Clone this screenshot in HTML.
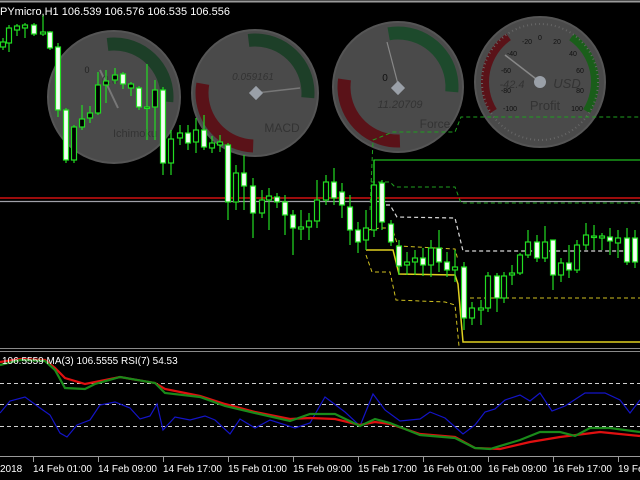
<!DOCTYPE html>
<html><head><meta charset="utf-8"><style>
html,body{margin:0;padding:0;background:#000;width:640px;height:480px;overflow:hidden}
svg{display:block}
text{font-family:"Liberation Sans",sans-serif}
</style></head><body>
<svg id="s" width="640" height="480" viewBox="0 0 640 480" xmlns="http://www.w3.org/2000/svg">
<rect width="640" height="480" fill="#000"/>
<line x1="0" y1="1.5" x2="640" y2="1.5" stroke="#9a9a9a" stroke-width="2"/>
<g id="gauges"></g>
<g id="lines">
<line x1="0" y1="198" x2="640" y2="198" stroke="#d01010" stroke-width="1.5"/>
<line x1="0" y1="201.5" x2="640" y2="201.5" stroke="#a0a0a8" stroke-width="1.2"/>
<polyline points="374,200 374,160 640,160" fill="none" stroke="#1fb81f" stroke-width="1.2"/>
<polyline points="370,210 373,140 393,132 455,132 461,117 640,117" fill="none" stroke="#1fa01f" stroke-width="1" stroke-dasharray="4,3"/>
<polyline points="371,182 390,182 395,187 455,187 461,203 640,203" fill="none" stroke="#1fa01f" stroke-width="1" stroke-dasharray="4,3"/>
<polyline points="372,205 390,205 397,217 455,218 463,251 640,251" fill="none" stroke="#d8d8d8" stroke-width="1.2" stroke-dasharray="4,3"/>
<polyline points="366,250 393,250 399,274 455,275 458,284 463,342 640,342" fill="none" stroke="#e0d020" stroke-width="1.5"/>
<polyline points="368,230 380,228 392,228 398,246 455,249 458,260" fill="none" stroke="#d0c020" stroke-width="1" stroke-dasharray="4,3"/>
<polyline points="366,255 372,272 390,272 396,300 445,302 455,305 459,346" fill="none" stroke="#d0c020" stroke-width="1" stroke-dasharray="4,3"/>
<polyline points="463,298 640,298" fill="none" stroke="#d0c020" stroke-width="1" stroke-dasharray="4,3"/>
</g>
<g id="candles"></g>
<text x="0" y="15" fill="#fff" font-size="11">PYmicro,H1  106.539 106.576 106.535 106.556</text>
<line x1="0" y1="348.5" x2="640" y2="348.5" stroke="#8a8a8a" stroke-width="1"/>
<line x1="0" y1="351.5" x2="640" y2="351.5" stroke="#8a8a8a" stroke-width="1"/>
<g stroke="#d0d0d0" stroke-width="1" stroke-dasharray="4,3">
<line x1="0" y1="383.5" x2="640" y2="383.5"/>
<line x1="0" y1="404.5" x2="640" y2="404.5"/>
<line x1="0" y1="426.5" x2="640" y2="426.5"/>
</g>
<polyline fill="none" stroke="#1414c8" stroke-width="1.2" points="0,413 10,401 25,397 40,408 50,415 60,433 67,437 77,425 90,420 100,405 115,402 130,408 140,419 150,416 157,404 163,430 175,417 190,420 205,416 215,420 230,434 240,419 255,428 270,420 295,428 310,423 325,397 345,412 360,426 373,394 385,410 400,421 420,419 430,412 445,418 463,434 475,425 485,412 495,409 505,400 520,395 530,401 540,393 552,411 565,406 585,393 605,393 620,400 630,413 640,400"/>
<polyline fill="none" stroke="#e01010" stroke-width="2.2" points="0,362 20,359 45,360 55,368 65,378 85,384 120,377 155,383 165,389 200,396 225,404 255,412 290,419 310,418 335,419 360,425 375,422 390,424 420,434 455,437 475,448 500,449 530,442 560,437 600,432 640,436"/>
<polyline fill="none" stroke="#1a8a1a" stroke-width="2.2" points="0,365 20,360 45,361 55,370 65,388 85,389 95,384 120,377 155,383 165,393 200,397 225,406 255,413 290,421 310,414 335,414 360,426 375,419 390,423 420,435 455,438 475,448 490,449 520,440 540,432 560,432 575,436 590,428 610,428 640,432"/>
<text x="2" y="364" fill="#fff" font-size="10">106.5559 MA(3) 106.5555 RSI(7) 54.53</text>
<line x1="0" y1="456.5" x2="640" y2="456.5" stroke="#9a9a9a" stroke-width="1"/>
<g fill="#fff" font-size="10">
<text x="0" y="472">2018</text>
<text x="33" y="472">14 Feb 01:00</text>
<text x="98" y="472">14 Feb 09:00</text>
<text x="163" y="472">14 Feb 17:00</text>
<text x="228" y="472">15 Feb 01:00</text>
<text x="293" y="472">15 Feb 09:00</text>
<text x="358" y="472">15 Feb 17:00</text>
<text x="423" y="472">16 Feb 01:00</text>
<text x="488" y="472">16 Feb 09:00</text>
<text x="553" y="472">16 Feb 17:00</text>
<text x="618" y="472">19 Fe</text>
</g>
<g stroke="#9a9a9a" stroke-width="1">
<line x1="33.5" y1="457" x2="33.5" y2="462"/><line x1="98.5" y1="457" x2="98.5" y2="462"/><line x1="163.5" y1="457" x2="163.5" y2="462"/><line x1="228.5" y1="457" x2="228.5" y2="462"/><line x1="293.5" y1="457" x2="293.5" y2="462"/><line x1="358.5" y1="457" x2="358.5" y2="462"/><line x1="423.5" y1="457" x2="423.5" y2="462"/><line x1="488.5" y1="457" x2="488.5" y2="462"/><line x1="553.5" y1="457" x2="553.5" y2="462"/><line x1="618.5" y1="457" x2="618.5" y2="462"/>
</g>
</svg>
<script>
var NS="http://www.w3.org/2000/svg";
function el(p,t,a){var e=document.createElementNS(NS,t);for(var k in a)e.setAttribute(k,a[k]);p.appendChild(e);return e;}
var G=document.getElementById("gauges");
function arc(cx,cy,r,a0,a1,col,w){
 var C=2*Math.PI*r,L=(a1-a0)/360*C;
 el(G,"circle",{cx:cx,cy:cy,r:r,fill:"none",stroke:col,"stroke-width":w,"stroke-dasharray":L+" "+C,transform:"rotate("+a0+" "+cx+" "+cy+")"});
}
function txt(x,y,s,sz,col,anc,it){var t=el(G,"text",{x:x,y:y,"font-size":sz,fill:col,"text-anchor":anc||"middle"});if(it)t.setAttribute("font-style","italic");t.textContent=s;}
function gauge(cx,cy,r){el(G,"circle",{cx:cx,cy:cy,r:r,fill:"#4a4a4a",stroke:"#555",'stroke-width':2});}
function diamond(cx,cy){el(G,"rect",{x:cx-5,y:cy-5,width:10,height:10,fill:"#9aa0a8",transform:"rotate(45 "+cx+" "+cy+")"});}
// gauge1 Ichimoku
gauge(114,97,66);arc(114,97,53,-97,5,"#1d3f28",13);
el(G,"line",{x1:100,y1:70,x2:118,y2:108,stroke:"#777","stroke-width":2});
txt(87,73,"0",9,"#222");txt(110,84,"0.0",12,"#3a3a3a","middle",true);txt(135,137,"Ichimoku",11,"#333");
// gauge2 MACD
gauge(255,93,63);arc(255,93,53,-97,5,"#1d3f28",13);arc(255,93,53,92,190,"#5a1218",13);
el(G,"line",{x1:256,y1:93,x2:300,y2:88,stroke:"#777","stroke-width":1.5});
diamond(256,93);txt(253,80,"0.059161",10,"#333","middle",true);txt(282,132,"MACD",12,"#333");
// gauge3 Force
gauge(398,87,65);arc(398,87,54,-100,5,"#1d4a2c",13);arc(398,87,54,88,188,"#5a1218",13);
el(G,"line",{x1:399,y1:88,x2:387,y2:42,stroke:"#888","stroke-width":1.2});
diamond(398,88);txt(385,81,"0",10,"#111");txt(400,108,"11.20709",11,"#333","middle",true);txt(435,128,"Force",12,"#333");
// gauge4 Profit
gauge(540,82,65);arc(540,82,55,148,235,"#5a1218",8);arc(540,82,55,-55,32,"#1a5e1a",8);
el(G,"circle",{cx:540,cy:82,r:58,fill:"none",stroke:"#666","stroke-width":2,"stroke-dasharray":"1,3"});
var nums=[["-20",527,44],["0",540,40],["20",557,44],["-40",512,56],["40",573,56],["-60",506,73],["60",580,73],["-80",506,93],["80",580,93],["-100",510,111],["100",577,111]];
nums.forEach(function(n){txt(n[1],n[2],n[0],7,"#111");});
el(G,"line",{x1:540,y1:82,x2:505,y2:55,stroke:"#888","stroke-width":1.5});
el(G,"circle",{cx:540,cy:82,r:6,fill:"#9aa0a8"});
txt(512,88,"-42.4",11,"#333","middle",true);txt(567,88,"USD",13,"#333","middle",true);txt(545,110,"Profit",13,"#333");
// candles [x, bodyTop, bodyBot, wickTop, wickBot, white]
var c=[[3,42,47,38,50,0],[9,28,43,25,52,0],[17,26,30,24,36,0],[25,25,28,23,38,0],[34,25,34,23,36,1],[43,32,34,15,36,0],[50,32,48,31,50,1],[58,47,110,43,117,1],[66,110,160,108,163,1],[74,127,160,125,163,0],[82,119,127,105,130,0],[90,113,118,106,123,0],[98,85,113,72,115,0],[106,81,85,70,103,0],[115,75,80,68,84,0],[123,74,84,72,89,1],[131,84,88,82,96,0],[139,88,107,86,110,1],[147,107,108,64,140,0],[155,90,107,80,140,0],[163,90,163,87,175,1],[171,139,163,130,175,0],[180,133,138,125,145,0],[188,133,143,125,150,1],[196,130,142,118,153,0],[204,130,147,115,150,1],[212,143,148,136,153,0],[220,142,145,135,152,0],
[228,145,202,143,220,1],[236,173,202,165,210,0],[244,173,186,155,210,1],[253,186,213,178,238,1],[262,200,213,190,218,0],[269,196,200,188,230,0],[277,197,202,193,208,1],[285,202,215,195,235,1],[293,215,228,210,255,1],[301,227,229,210,240,0],[309,221,227,213,240,0],[317,200,221,180,228,0],[326,182,200,175,205,0],[334,182,198,168,205,1],[342,192,205,183,218,1],[350,207,230,195,245,1],[358,230,242,222,253,1],[366,228,240,210,250,0],[374,185,230,160,237,0],[382,183,222,180,230,1],[391,224,242,220,246,1],[399,246,266,240,275,1],[407,262,265,252,275,0],[415,258,262,250,275,0],[423,258,265,248,276,1],[431,248,265,240,277,0],[439,248,262,230,272,1],[447,262,270,252,277,1],[455,267,270,250,282,0],[464,267,318,262,330,1],[472,308,318,302,325,0],[481,308,310,300,325,0],[488,276,308,272,312,0],[497,276,298,273,312,1],[504,276,298,272,303,0],[512,273,275,265,285,0],[520,255,273,253,275,0],[528,242,255,230,258,0],[537,242,258,235,262,1],[545,242,258,226,262,0],[553,240,275,240,290,1],[561,263,275,258,282,0],[569,263,270,245,278,1],[577,245,270,240,273,0],[586,235,245,223,250,0],[594,236,237,225,250,0],[602,236,238,233,250,0],[610,237,241,228,255,1],[618,238,243,230,258,0],[627,238,262,228,265,1],[635,238,262,230,268,1]];
var K=document.getElementById("candles");
c.forEach(function(d){
 el(K,"line",{x1:d[0],y1:d[3],x2:d[0],y2:d[4],stroke:"#22dd22","stroke-width":1.2});
 var h=Math.max(d[2]-d[1],1.5);
 el(K,"rect",{x:d[0]-2.5,y:d[1],width:5,height:h,fill:d[5]?"#f4fff4":"#000",stroke:"#22dd22","stroke-width":1.2});
});
</script>
</body></html>
